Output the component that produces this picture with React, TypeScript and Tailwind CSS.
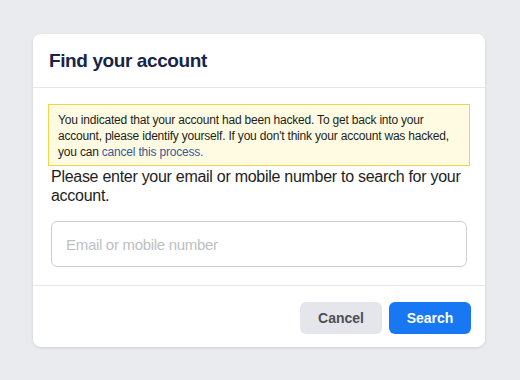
import React, { useState } from 'react'

export default function App() {
  const [query, setQuery] = useState('')

  return (
    <div className="min-h-[380px] w-full bg-[#e9ebee] pt-[34px] pl-[33px] font-['Liberation_Sans',Arial,sans-serif]">
      <div className="w-[452px] rounded-lg bg-white shadow-[0_1px_3px_rgba(0,0,0,0.12)]">
        {/* header */}
        <div className="flex h-[54px] items-center border-b border-[#e4e6eb] px-4 pt-[2px]">
          <h2 className="text-[19px] font-bold tracking-[-0.4px] text-[#172546]">Find your account</h2>
        </div>

        {/* body */}
        <div className="px-[15px] pt-4 pb-[18px]">
          <div className="border border-[#f3d449] bg-[#fffbe2] px-[9px] pt-[7px] pb-[5px] text-[12px] leading-4 tracking-[-0.2px] text-[#1c1e21]">
            You indicated that your account had been hacked. To get back into your account, please identify yourself. If you don't think your account was hacked, you can{' '}
            <a href="#" className="text-[#385898]">cancel this process.</a>
          </div>
          <p className="px-[3px] pt-[1px] text-[16px] leading-[19px] tracking-[-0.28px] text-[#1c1e21]">
            Please enter your email or mobile number to search for your account.
          </p>
          <div className="mt-[16px] px-[3px]">
            <input
              value={query}
              onChange={(e) => setQuery(e.target.value)}
              placeholder="Email or mobile number"
              className="h-[46px] w-full rounded-md border border-[#ccd0d5] px-[14px] text-[15px] tracking-[-0.3px] text-[#1c1e21] outline-none placeholder:text-[#bcc0c4]"
            />
          </div>
        </div>

        {/* footer */}
        <div className="flex justify-end gap-[7px] border-t border-[#e4e6eb] px-[14px] pt-4 pb-[13px]">
          <button className="h-8 w-[82px] rounded-md bg-[#e4e6eb] text-[14px] font-bold text-[#4b4f56]">Cancel</button>
          <button className="h-8 w-[82px] rounded-md bg-[#1877f2] text-[14px] font-bold text-white">Search</button>
        </div>
      </div>
    </div>
  )
}
